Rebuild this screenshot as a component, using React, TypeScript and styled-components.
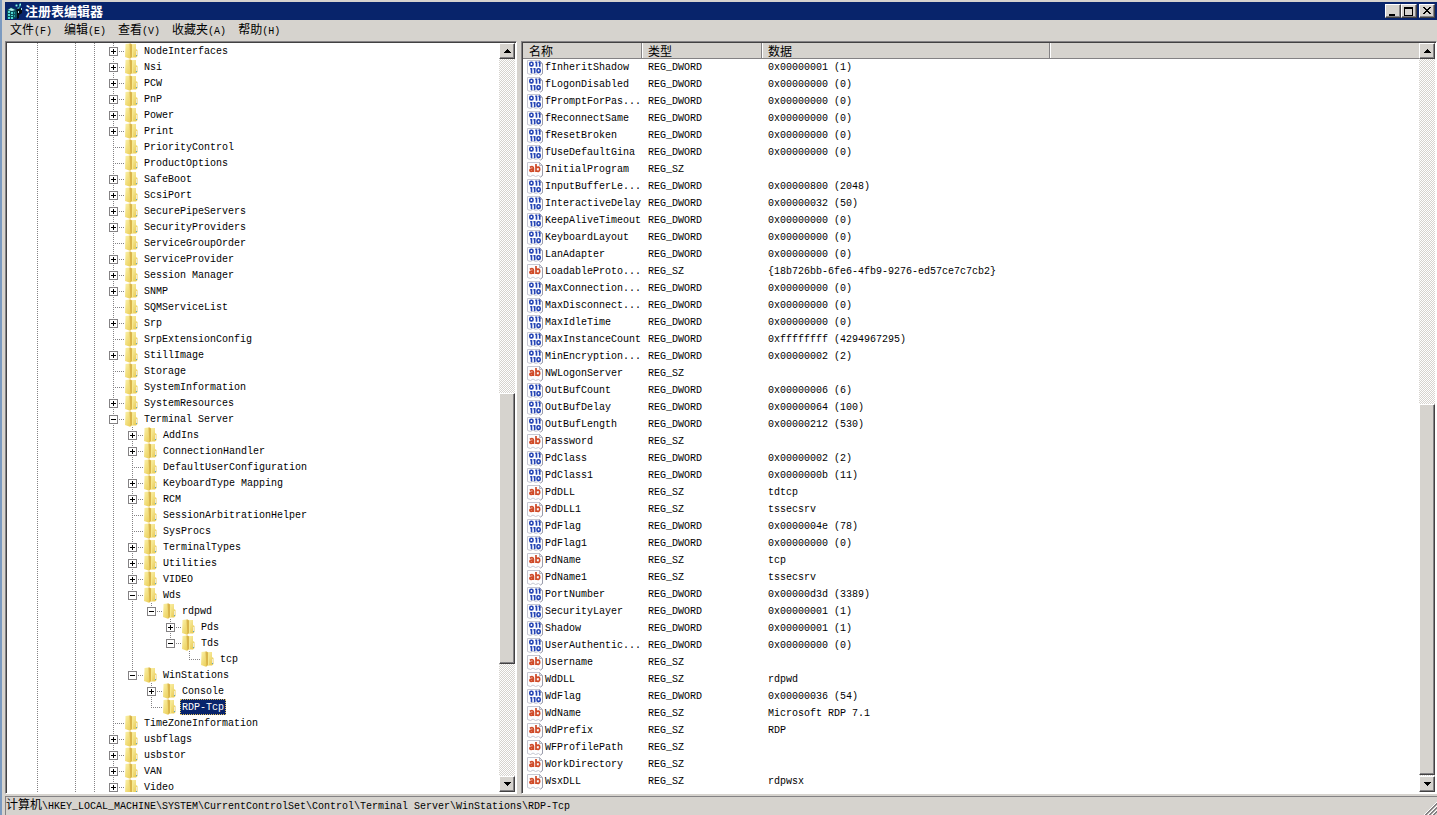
import React from "react";
import styled, { createGlobalStyle, css } from "styled-components";

const face = "#d6d3ce";
const shadow = "#848284";
const dark = "#424142";
const navy = "#08246b";
const mono = `"Liberation Mono", "Noto Sans CJK SC", monospace`;
const cjk = `"Noto Sans CJK SC", sans-serif`;

const Global = createGlobalStyle`
  *, *::before, *::after { box-sizing: border-box; }
  body { margin: 0; background: ${face}; color: #000; font: 10px/16px ${mono}; }
  button { margin: 0; padding: 0; font: inherit; color: inherit; }
`;

const dotsY = `repeating-linear-gradient(180deg, ${shadow} 0 1px, transparent 1px 2px)`;
const dotsX = `repeating-linear-gradient(90deg, ${shadow} 0 1px, transparent 1px 2px)`;

const raised = css`
  border: 1px solid;
  border-color: #fff ${dark} ${dark} #fff;
  box-shadow: inset -1px -1px 0 ${shadow};
  background: ${face};
`;

const Window = styled.div`
  height: 100vh;
  display: flex;
  flex-direction: column;
  padding: 2px 0 0 3px;
  border-left: 2px solid #7b9ac0;
  background: ${face};
  overflow: hidden;
`;

const TitleBar = styled.header`
  flex: none;
  display: flex;
  align-items: center;
  height: 18px;
  padding: 0 2px;
  gap: 2px;
  background: ${navy};
  color: #fff;
`;

const Title = styled.h1`
  flex: 1;
  margin: 0;
  font: bold 13px/18px ${cjk};
`;

const WindowButtons = styled.div`
  display: flex;
`;

const WindowButton = styled.button<{ $apart?: boolean }>`
  ${raised}
  width: 16px;
  height: 14px;
  margin-left: ${(p) => (p.$apart ? 2 : 0)}px;
  display: grid;
  place-items: center;
`;

const MenuBar = styled.nav`
  flex: none;
  display: flex;
  gap: 12px;
  height: 21px;
  padding: 0 5px;
`;

const MenuItem = styled.button`
  border: 0;
  background: none;
  white-space: pre;
`;

const Cjk = styled.span`
  font: 12px/16px ${cjk};
`;

const Panes = styled.main`
  flex: 1;
  min-height: 0;
  display: flex;
  gap: 4px;
`;

const Pane = styled.section<{ $basis?: number }>`
  flex: ${(p) => (p.$basis ? `0 0 ${p.$basis}px` : "1 1 0")};
  min-width: 0;
  display: flex;
  border: 1px solid;
  border-color: ${shadow} #fff #fff ${shadow};
  background: #fff;
  box-shadow: inset 1px 1px 0 ${dark};
  padding: 1px;
`;

const PaneBody = styled.div`
  flex: 1;
  min-width: 0;
  overflow: hidden;
`;

const Bar = styled.div`
  flex: none;
  width: 16px;
  display: flex;
  flex-direction: column;
  background: repeating-conic-gradient(${face} 0 25%, #fff 0 50%) 0 0 / 2px 2px;
`;

const BarButton = styled.button`
  ${raised}
  flex: none;
  height: 16px;
  display: grid;
  place-items: center;
`;

const BarPart = styled.div<{ $grow: number; $thumb?: boolean }>`
  flex: ${(p) => p.$grow} 1 0;
  ${(p) => p.$thumb && raised}
`;

const Branch = styled.ul`
  list-style: none;
  margin: 0;
  padding: 0;
`;

const Node = styled.div`
  display: flex;
  height: 16px;
  padding-left: 21px;
`;

const Guide = styled.span<{ $line: boolean }>`
  flex: none;
  width: 19px;
  background: ${(p) => (p.$line ? dotsY : "none")} 9px 0 / 1px 16px no-repeat;
`;

const Joint = styled.span<{ $last: boolean }>`
  flex: none;
  width: 20px;
  padding: 4px 0 0 5px;
  background:
    ${dotsY} 9px 0 / 1px ${(p) => (p.$last ? 9 : 16)}px no-repeat,
    ${dotsX} 9px 8px / 12px 1px no-repeat;
`;

const Expander = styled.button<{ $open: boolean }>`
  display: block;
  width: 9px;
  height: 9px;
  border: 1px solid ${shadow};
  background:
    linear-gradient(#000, #000) 1px 3px / 5px 1px no-repeat,
    linear-gradient(#000, #000) 3px 1px / 1px ${(p) => (p.$open ? 0 : 5)}px no-repeat,
    #fff;
`;

const Label = styled.span<{ $selected?: boolean }>`
  height: 16px;
  margin-left: 2px;
  padding: 1px 2px 0;
  line-height: 16px;
  white-space: pre;
  ${(p) =>
    p.$selected &&
    css`
      background: ${navy};
      color: #fff;
      outline: 1px dotted #e0c060;
      outline-offset: -1px;
    `}
`;

const Values = styled.table`
  width: 100%;
  table-layout: fixed;
  border-collapse: separate;
  border-spacing: 0;
`;

const Col = styled.col<{ $width?: number }>`
  width: ${(p) => (p.$width ? `${p.$width}px` : "auto")};
`;

const Head = styled.th`
  height: 16px;
  padding: 0 0 0 6px;
  border: 0 solid ${shadow};
  border-width: 0 1px 1px 0;
  box-shadow: inset 1px 0 0 #fff;
  background: ${face};
  text-align: left;
  font: 12px/15px ${cjk};
  &:first-child { box-shadow: none; }
  &:last-child { border-right: 0; }
`;

const Cell = styled.td`
  height: 17px;
  padding: 0 0 0 6px;
  line-height: 17px;
  white-space: pre;
  overflow: hidden;
`;

const NameCell = styled(Cell)`
  padding: 0 0 0 4px;
`;

const Name = styled.div`
  display: flex;
  gap: 2px;
`;

const StatusBar = styled.footer`
  flex: none;
  display: flex;
  align-items: center;
  justify-content: space-between;
  height: 19px;
  margin-top: 2px;
  border-top: 1px solid ${shadow};
  border-left: 1px solid ${shadow};
  white-space: pre;
`;

const Path = styled.div`
  line-height: 18px;
`;

const Grip = styled.svg`
  align-self: flex-end;
`;

const RegeditIcon = () => (
  <svg width="16" height="16" viewBox="0 0 16 16" aria-hidden="true">
    <path d="M0 7l4-3 6 3v7l-3 2H0z" fill="#0a5058" />
    <path d="M1 7l3-2 4 2-3 1z" fill="#b6f4ee" />
    <path d="M1 8h2v2H1zM4 9h2v2H4zM1 11h2v2H1zM4 12h2v1H4zM1 14h2v2H1zM4 14h2v2H4z" fill="#4fd6d2" />
    <path d="M7 9h1v2H7zM7 12h1v2H7z" fill="#1f9a9c" />
    <path d="M9 7l3-2 3 1v4l-3 2v3l-2 1V9z" fill="#050c14" />
    <path d="M8 2l2-1 1 2-2 1zM12 1l2-1v3l-2 1zM10 5l2-1 1 1-2 1z" fill="#3fb9b8" />
    <path d="M9 2h1v1H9zM13 1h1v1h-1zM14 5h1v2h-1zM11 8h1v2h-1z" fill="#a9e6e4" />
  </svg>
);

const FolderIcon = () => (
  <svg width="16" height="16" viewBox="0 0 16 16" aria-hidden="true">
    <defs>
      <linearGradient id="leaf" x1="0" y1="0" x2="1" y2="1">
        <stop offset="0" stopColor="#fbf2ab" />
        <stop offset="1" stopColor="#e9cb52" />
      </linearGradient>
      <linearGradient id="cover" x1="0" y1="0" x2="1" y2="1">
        <stop offset="0" stopColor="#fdf6b8" />
        <stop offset="1" stopColor="#e6c648" />
      </linearGradient>
    </defs>
    <path d="M6 1l6 0v5l1.500 1v6l-1.500 1.500H6z" fill="url(#cover)" />
    <path d="M1.500 1l4-.5L7 2v13l-1 .8L1 14z" fill="url(#leaf)" />
    <path d="M5.500.5h1.300L8 1.500V14l-1.600 1.500z" fill="#d9b44a" />
    <path d="M8 2l1-.5V14l-1 .8z" fill="#f7e98e" />
    <path d="M12 8h1v4h-1z" fill="#f3ead0" />
    <path d="M12 12h1v1h-1z" fill="#5aa5c8" />
  </svg>
);

const Sheet = () => (
  <>
    <path d="M.5 1.500h12l3 3v10l-2 1.500-2-1.500-3 1-2.500-1.500-2.500 1.500-3-1z" fill="#fdfdfe" stroke="#c6c7d2" />
    <path d="M12.500 1.500v3h3z" fill="#e4e5ec" stroke="#9a9cab" strokeWidth=".7" />
    <path d="M15.500 5v9.500l-2 1.500" fill="none" stroke="#9a9cab" />
  </>
);

const StringIcon = () => (
  <svg width="16" height="17" viewBox="0 0 16 17" aria-hidden="true">
    <Sheet />
    <g fill="none" stroke="#cf4a28" strokeWidth="1.700">
      <path d="M2.800 6.200Q6.400 4.800 6.400 7.200V11M6.400 8.200H4.200Q2.800 8.300 2.900 9.400 3 10.400 4.200 10.300 5.800 10.200 6.400 9" />
      <path d="M9 3v8M9 6.800Q12.600 4.800 12.700 8.200 12.600 11.400 9 9.800" />
    </g>
  </svg>
);

const BinaryIcon = () => (
  <svg width="16" height="17" viewBox="0 0 16 17" aria-hidden="true">
    <Sheet />
    <g fill="none" stroke="#2343b4" strokeWidth="1.600">
      <rect x="2.800" y="3.300" width="3.200" height="3.600" rx="1.400" />
      <path d="M8.200 3.200h1.300v4.500M11.400 3.200h1.300v4.500" />
      <path d="M3.200 9.700h1.300v4.500M6.400 9.700h1.300v4.500" />
      <rect x="10" y="9.800" width="3.200" height="3.600" rx="1.400" />
    </g>
  </svg>
);

type Key = { name: string; kids?: Key[]; more?: boolean; selected?: boolean };
const leaf = (name: string): Key => ({ name });
const more = (name: string): Key => ({ name, more: true });

const keys: Key[] = [
  ...["NodeInterfaces", "Nsi", "PCW", "PnP", "Power", "Print"].map(more),
  ...["PriorityControl", "ProductOptions"].map(leaf),
  ...["SafeBoot", "ScsiPort", "SecurePipeServers", "SecurityProviders"].map(more),
  leaf("ServiceGroupOrder"),
  ...["ServiceProvider", "Session Manager", "SNMP"].map(more),
  leaf("SQMServiceList"),
  more("Srp"),
  leaf("SrpExtensionConfig"),
  more("StillImage"),
  leaf("Storage"),
  leaf("SystemInformation"),
  more("SystemResources"),
  {
    name: "Terminal Server",
    kids: [
      more("AddIns"),
      more("ConnectionHandler"),
      leaf("DefaultUserConfiguration"),
      more("KeyboardType Mapping"),
      more("RCM"),
      leaf("SessionArbitrationHelper"),
      leaf("SysProcs"),
      more("TerminalTypes"),
      more("Utilities"),
      more("VIDEO"),
      {
        name: "Wds",
        kids: [{ name: "rdpwd", kids: [more("Pds"), { name: "Tds", kids: [leaf("tcp")] }] }],
      },
      { name: "WinStations", kids: [more("Console"), { name: "RDP-Tcp", selected: true }] },
    ],
  },
  leaf("TimeZoneInformation"),
  ...["usbflags", "usbstor", "VAN", "Video"].map(more),
];

const dword = (name: string, hex: string) =>
  [name, "REG_DWORD", `0x${hex.padStart(8, "0")} (${parseInt(hex, 16)})`] as const;
const sz = (name: string, data = "") => [name, "REG_SZ", data] as const;

const values = [
  dword("fInheritShadow", "1"),
  dword("fLogonDisabled", "0"),
  dword("fPromptForPas...", "0"),
  dword("fReconnectSame", "0"),
  dword("fResetBroken", "0"),
  dword("fUseDefaultGina", "0"),
  sz("InitialProgram"),
  dword("InputBufferLe...", "800"),
  dword("InteractiveDelay", "32"),
  dword("KeepAliveTimeout", "0"),
  dword("KeyboardLayout", "0"),
  dword("LanAdapter", "0"),
  sz("LoadableProto...", "{18b726bb-6fe6-4fb9-9276-ed57ce7c7cb2}"),
  dword("MaxConnection...", "0"),
  dword("MaxDisconnect...", "0"),
  dword("MaxIdleTime", "0"),
  dword("MaxInstanceCount", "ffffffff"),
  dword("MinEncryption...", "2"),
  sz("NWLogonServer"),
  dword("OutBufCount", "6"),
  dword("OutBufDelay", "64"),
  dword("OutBufLength", "212"),
  sz("Password"),
  dword("PdClass", "2"),
  dword("PdClass1", "b"),
  sz("PdDLL", "tdtcp"),
  sz("PdDLL1", "tssecsrv"),
  dword("PdFlag", "4e"),
  dword("PdFlag1", "0"),
  sz("PdName", "tcp"),
  sz("PdName1", "tssecsrv"),
  dword("PortNumber", "d3d"),
  dword("SecurityLayer", "1"),
  dword("Shadow", "1"),
  dword("UserAuthentic...", "0"),
  sz("Username"),
  sz("WdDLL", "rdpwd"),
  dword("WdFlag", "36"),
  sz("WdName", "Microsoft RDP 7.1"),
  sz("WdPrefix", "RDP"),
  sz("WFProfilePath"),
  sz("WorkDirectory"),
  sz("WsxDLL", "rdpwsx"),
];

const menus = [
  ["文件", "(F)"],
  ["编辑", "(E)"],
  ["查看", "(V)"],
  ["收藏夹", "(A)"],
  ["帮助", "(H)"],
];

type TreeProps = { items: Key[]; guides: boolean[]; continues?: boolean };

function Tree({ items, guides, continues = false }: TreeProps) {
  return (
    <Branch>
      {items.map((item, i) => {
        const last = !continues && i === items.length - 1;
        return (
          <li key={item.name}>
            <Node>
              {guides.map((line, g) => (
                <Guide key={g} $line={line} />
              ))}
              <Joint $last={last}>
                {(item.more || item.kids) && (
                  <Expander $open={!!item.kids} aria-label={item.name} aria-expanded={!!item.kids} />
                )}
              </Joint>
              <FolderIcon />
              <Label $selected={item.selected}>{item.name}</Label>
            </Node>
            {item.kids && <Tree items={item.kids} guides={[...guides, !last]} />}
          </li>
        );
      })}
    </Branch>
  );
}

function ScrollBar({ before, thumb, after }: { before: number; thumb: number; after: number }) {
  return (
    <Bar>
      <BarButton aria-label="向上滚动">
        <svg width="7" height="4" viewBox="0 0 7 4" shapeRendering="crispEdges">
          <path d="M3 0h1v1h1v1h1v1h1v1H0V3h1V2h1V1h1z" />
        </svg>
      </BarButton>
      <BarPart $grow={before} />
      <BarPart $grow={thumb} $thumb />
      <BarPart $grow={after} />
      <BarButton aria-label="向下滚动">
        <svg width="7" height="4" viewBox="0 0 7 4" shapeRendering="crispEdges">
          <path d="M0 0h7v1H6v1H5v1H4v1H3V3H2V2H1V1H0z" />
        </svg>
      </BarButton>
    </Bar>
  );
}

export default function App() {
  return (
    <Window>
      <Global />
      <TitleBar>
        <RegeditIcon />
        <Title>注册表编辑器</Title>
        <WindowButtons>
          <WindowButton aria-label="最小化">
            <svg width="10" height="9" viewBox="0 0 10 9">
              <path d="M1 7h6v2H1z" />
            </svg>
          </WindowButton>
          <WindowButton aria-label="最大化">
            <svg width="10" height="9" viewBox="0 0 10 9">
              <path d="M0 0h9v9H0zM1 2v6h7V2z" fillRule="evenodd" />
            </svg>
          </WindowButton>
          <WindowButton aria-label="关闭" $apart>
            <svg width="10" height="8" viewBox="0 0 10 8" shapeRendering="crispEdges">
              <path d="M1 0h2v1h1v1h2V1h1V0h2v1H8v1H7v1H6v1h1v1h1v1h1v1H7V6H6V5H4v1H3v1H1V6h1V5h1V4h1V3H3V2H2V1H1z" />
            </svg>
          </WindowButton>
        </WindowButtons>
      </TitleBar>
      <MenuBar>
        {menus.map(([text, key]) => (
          <MenuItem key={key}>
            <Cjk>{text}</Cjk>
            {key}
          </MenuItem>
        ))}
      </MenuBar>
      <Panes>
        <Pane $basis={512}>
          <PaneBody>
            <Tree items={keys} guides={[true, false, true, true]} continues />
          </PaneBody>
          <ScrollBar before={335} thumb={271} after={112} />
        </Pane>
        <Pane>
          <PaneBody>
            <Values>
              <colgroup>
                <Col $width={119} />
                <Col $width={120} />
                <Col $width={288} />
                <Col />
              </colgroup>
              <thead>
                <tr>
                  <Head scope="col">名称</Head>
                  <Head scope="col">类型</Head>
                  <Head scope="col">数据</Head>
                  <Head as="td" />
                </tr>
              </thead>
              <tbody>
                {values.map(([name, type, data]) => (
                  <tr key={name}>
                    <NameCell>
                      <Name>
                        {type === "REG_SZ" ? <StringIcon /> : <BinaryIcon />}
                        {name}
                      </Name>
                    </NameCell>
                    <Cell>{type}</Cell>
                    <Cell>{data}</Cell>
                    <Cell />
                  </tr>
                ))}
              </tbody>
            </Values>
          </PaneBody>
          <ScrollBar before={346} thumb={371} after={1} />
        </Pane>
      </Panes>
      <StatusBar>
        <Path>
          <Cjk>计算机</Cjk>
          {"\\HKEY_LOCAL_MACHINE\\SYSTEM\\CurrentControlSet\\Control\\Terminal Server\\WinStations\\RDP-Tcp"}
        </Path>
        <Grip width="13" height="13" viewBox="0 0 13 13" aria-hidden="true">
          <path d="M0 13L13 0M4 13l9-9M8 13l5-5" stroke="#fff" />
          <path d="M1 13L13 1M2 13L13 2M5 13l8-8M6 13l7-7M9 13l4-4M10 13l3-3" stroke={shadow} />
        </Grip>
      </StatusBar>
    </Window>
  );
}
